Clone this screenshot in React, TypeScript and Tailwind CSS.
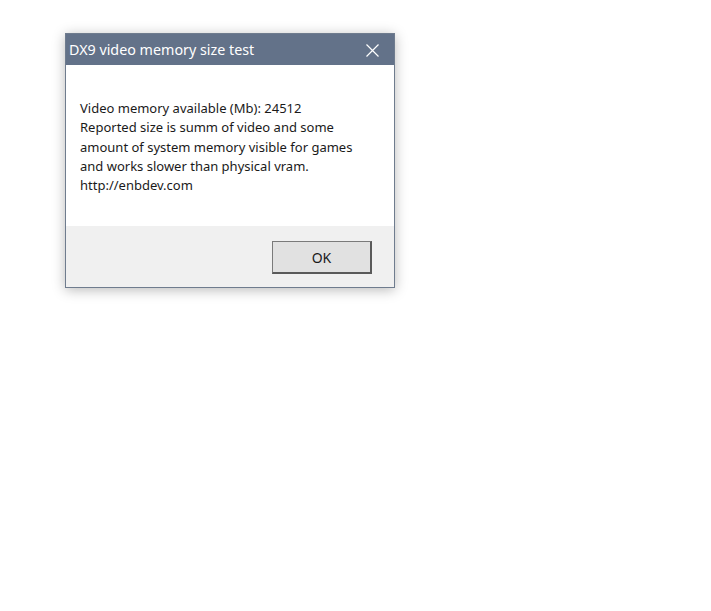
export default function App() {
  return (
    <div className="w-[711px] h-[611px] bg-white pt-[33px] pl-[65px]" style={{ fontFamily: '"Noto Sans", "Open Sans", sans-serif' }}>
      <div className="w-[330px] border border-[#6f7c8e] bg-white shadow-[0_2px_12px_rgba(0,0,0,0.28)] flex flex-col">
        {/* title bar */}
        <div className="h-[31px] bg-[#637289] flex items-center justify-between pl-[3px] pt-[1px]">
          <span className="text-white text-[14.3px] leading-none">DX9 video memory size test</span>
          <div className="w-[44px] h-full flex items-center justify-center">
            <svg width="13" height="13" viewBox="0 0 13 13" fill="none" stroke="white" strokeWidth="1.2">
              <path d="M0.5 0.5 L12.5 12.5 M12.5 0.5 L0.5 12.5" />
            </svg>
          </div>
        </div>
        {/* message */}
        <div className="pt-[34px] pb-[31px] pl-[14px] text-[13px] leading-[19.25px] text-[#1a1a1a]">
          <p>Video memory available (Mb): 24512</p>
          <p>Reported size is summ of video and some</p>
          <p>amount of system memory visible for games</p>
          <p>and works slower than physical vram.</p>
          <p>http://enbdev.com</p>
        </div>
        {/* buttons */}
        <div className="h-[61px] bg-[#f0f0f0] flex items-start justify-end pt-[15px] pr-[22px]">
          <button className="w-[100px] h-[33px] bg-[#e1e1e1] border border-[#7a7a7a] border-r-2 border-b-2 border-r-[#5a5a5a] border-b-[#5a5a5a] text-[14px] text-[#1a1a1a]">
            OK
          </button>
        </div>
      </div>
    </div>
  );
}
